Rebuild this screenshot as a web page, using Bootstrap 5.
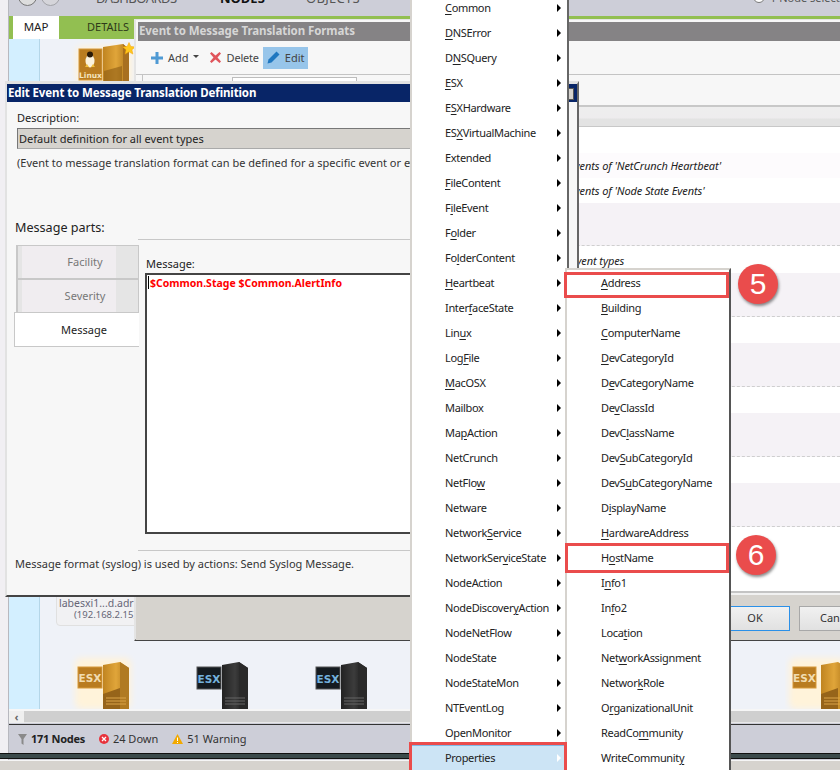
<!DOCTYPE html>
<html lang="en">
<head>
<meta charset="utf-8">
<title>Edit Event to Message Translation Definition</title>
<link href="https://cdn.jsdelivr.net/npm/bootstrap@5.3.0/dist/css/bootstrap.min.css" rel="stylesheet">
<style>
html,body{margin:0;padding:0;background:#fff}
body{font-family:"Noto Sans","DejaVu Sans",sans-serif;font-size:11px;line-height:1.2;color:#222}
.stage{position:relative;width:840px;height:770px;overflow:hidden;background:#f1eff3}
.abs{position:absolute}
/* background application */
.appwin{left:8px;top:0;width:832px;height:770px;background:#cdced8;border-left:1px solid #b8b8bf}
.topnav{height:16px;overflow:hidden;position:relative}
.topnav span{position:absolute;top:-9px;font-size:13px;color:#555;letter-spacing:.3px;white-space:nowrap}
.topnav span.dash{left:87px;letter-spacing:-.5px}
.topnav b{position:absolute;top:-9px;font-size:13px;color:#111}
.circle{position:absolute;width:19px;height:19px;border-radius:50%;border:1.5px solid #777;top:-13px;background:#ddd}
.circle.dim{left:32px;opacity:.5}
.circle.radio{left:744px;width:12px;height:12px;top:-9px;background:#fff}
.topnav span.seltxt{left:761px;font-size:11px;top:-9px;letter-spacing:0}
.greenbar{height:23px;background:#92bf51;border-top:0;display:flex}
.tabmap{margin-left:4px;width:46px;background:#fff;text-align:center;line-height:22px;font-size:11.5px;color:#222}
.tabdet{margin-left:28px;line-height:22px;font-size:11px;color:#2e3a1a}
.canvas{left:9px;top:39px;width:831px;height:671px;background:#eff2f8}
.stripe{left:9px;top:39px;width:31px;height:671px;background:#d3efff;border-right:1px solid #b4d6e8}
.scrollx{left:9px;top:709px;width:831px;height:14px;background:#cfcfcf;border-top:2px solid #f6f6f6;border-bottom:1px solid #e8e8e8}
.scrollbtn{width:15px;height:12px;background:#efefef;color:#666;font-size:11px;line-height:11px;text-align:center;font-weight:700}
.statusbar{left:9px;top:724px;width:831px;height:29px;background:#cdced8;border-top:1px solid #333;display:flex;align-items:center;padding-left:9px;font-size:11px;color:#333}
.statusbar .st{display:inline-flex;align-items:center;gap:4px;margin-right:14px}
.statusbar b{color:#222;letter-spacing:-.3px}
.darkband{left:0;top:753px;width:840px;height:6px;background:#3b4a4b;border-top:1px solid #111;border-bottom:1px solid #111}
.botband{left:0;top:760px;width:840px;height:10px;background:#d6d3ce;border-top:1px solid #f5f5f5}
.nodelabel{left:56px;top:590px;width:110px;height:36px;background:#f1f1f3;border:1px solid #e0e0e0;border-radius:4px;font-size:10.5px;color:#667;padding-top:6px;line-height:12px}
.nodelabel span{display:block;white-space:nowrap;padding-left:2px}
.nodelabel span+span{padding-left:17px;font-size:9.5px}
/* formats window */
.fmtwin{left:134px;top:19px;width:706px;height:622px;background:#f7f7f7;border-left:2px solid #e4e4e4;border-top:1px solid #e4e4e4;border-bottom:2px solid #444}
.fmttitle{margin:2px 0 0 2px;height:19px;background:#858385;color:#d6d6d6;font-weight:700;font-size:11.5px;letter-spacing:-.08px;line-height:18px;padding-left:1px;white-space:nowrap}
.fmttool{height:34px;border-bottom:1px solid #c4c4c4;display:flex;align-items:center;padding-left:15px;color:#444;font-size:11px}
.tbtn{display:inline-flex;align-items:center;gap:5px;height:22px}
.tbtn.addb{margin-right:11px}
.tbtn.delb{margin-right:4px;gap:6px;letter-spacing:-.2px}
.tbtn.on{background:#97c5ea;padding:0 3px 0 4px}
.caretx{display:inline-block;border-left:3px solid transparent;border-right:3px solid transparent;border-top:3px solid #444;margin:0 0 2px -1px}
.hdrbox{left:6px;top:54px;width:700px;height:10px;border-top:1px solid #c4c4c4;border-left:1px solid #c4c4c4}
.hdrcell{left:96px;top:57px;width:125px;height:8px;background:#fff;border:1px solid #bdbdbd;border-bottom:0}
.fmtbody{left:136px;top:105px;width:704px;height:491px;background:#fff}
.thead{height:22px;background:linear-gradient(#eeeeee 0,#eeecee 60%,#e3e3e3 61%,#e3e3e3 100%);border-top:2px solid #c8c8c8;border-bottom:1px solid #c8c8c8}
.rowx{position:absolute;left:0;width:100%}
.tint1{background:#fdfbfd}
.tint2{background:#f5f2f6;border-bottom:1px dashed #cfcfcf}
.rowtxt{font-style:italic;font-size:11px;letter-spacing:-.1px;color:#222;white-space:nowrap}
.fmtfoot{left:136px;top:591px;width:704px;height:49px;background:#d6d3ce;border-top:2px solid #c4c4c4}
.fmtfoot::before{content:"";position:absolute;left:0;right:0;top:0;height:2px;background:#f1f1f1}
.okbtn{left:584px;top:13px;width:70px;height:25px;background:linear-gradient(#f1f1f1,#e1e1e1);border:1px solid #2b90e8;border-radius:0;padding:0;font-size:11px;color:#333}
.cancelbtn{left:663px;top:13px;width:70px;height:25px;background:linear-gradient(#f1f1f1,#e1e1e1);border:1px solid #a8a8a8;border-radius:0;padding:0;font-size:11px;color:#333;text-align:left;padding-left:20px}
/* front dialog */
.dlg{left:5px;top:81px;width:574px;height:516px;background:#f7f7f7;border:1px solid #e2e2e2;border-top-width:3px;border-left-width:2px;border-right:2px solid #666;border-bottom:2px solid #444}
.dlgtitle{height:18px;background:#082567;color:#fff;font-weight:700;font-size:11.5px;letter-spacing:-.12px;line-height:18px;padding-left:1px;white-space:nowrap;border-right:1px solid #082567}
.dlgx{right:0;top:0;width:9px;height:18px}
.dlgx i{position:absolute;left:0;top:4px;width:6px;height:12px;background:#d6d3ce;border:1px solid #555}
.dlgin{width:403px;height:495px;position:relative;overflow:hidden;padding:9px 0 0 10px}
.lab{font-size:11px;color:#222;white-space:nowrap}
.field{margin:4px 0 0 0;width:100%;height:21px;background:#d6d3ce;border:1px solid #aaa;border-top:1px solid #777;border-left:1px solid #777;border-right:0;padding-left:1px;line-height:19px;font-size:11px;color:#222;white-space:nowrap}
.hint{margin-top:7px;font-size:11px;color:#333;white-space:nowrap}
.msgparts{left:8px;top:118px;font-size:12.6px;color:#222}
.rule1{left:131px;top:137px;width:272px;height:1px;background:#c8c8c8}
.rule2{left:131px;top:448px;width:272px;height:1px;background:#c8c8c8}
.dtab{left:9px;width:123px;height:34px;background:linear-gradient(90deg,#f0edf0 0,#f0edf0 82%,#e5e5e5 82%);border:1px solid #c8c8c8;border-left:2px solid #c8c8c8;color:#777;text-align:center;line-height:32px;font-size:11px;padding-left:14px}
.dtab::before{content:"";position:absolute;left:0;top:0;bottom:0;width:4px;background:#e5e5e5}
.dtab.sel{left:7px;width:125px;height:35px;background:#fff;color:#222;border:1px solid #c8c8c8;border-right:0;line-height:34px}
.dtab.sel::before{display:none}
.msglab{left:139px;top:155px;font-size:11px;color:#222}
.msgbox{left:138px;top:171px;width:270px;height:261px;background:#fff;border:2px solid #444;border-right:0;padding:1px 0 0 1px;color:#f00;font-weight:700;font-size:10.5px;white-space:nowrap}
.msgcursor{display:inline-block;width:1px;height:13px;background:#000;margin-right:1px;vertical-align:-2px}
.msgnote{left:8px;top:455px;font-size:11px;color:#333;white-space:nowrap}
/* menus */
.menu1{left:410px;top:-5px;width:159px;height:780px;background:#fff;border-left:2px solid #d6d3ce;border-right:2px solid #666;margin:0;padding:0;list-style:none}
.menu2{left:565px;top:268px;width:166px;height:506px;background:#fff;border-left:2px solid #d6d3ce;border-top:2px solid #d6d3ce;border-right:2px solid #555;margin:0;padding:0;list-style:none}
.mitem{height:25px;line-height:25px;display:flex;align-items:center;justify-content:space-between;color:#222;font-size:11px;letter-spacing:-.33px;white-space:nowrap}
.menu1 .mitem{padding:0 6px 0 33px}
.menu2 .mitem{padding-left:34px}
.mitem u{text-underline-offset:2px}
.arr{width:0;height:0;border-top:4px solid transparent;border-bottom:4px solid transparent;border-left:4px solid #000}
.mitem.hot{background:#cce4f5;box-shadow:inset 0 1px 0 #7fb9e6}
.mitem.hot .arr{border-left-color:#fff}
.redbox{border:3px solid #ea4c4c;background:transparent;pointer-events:none}
.numb{width:40px;height:40px;border-radius:50%;background:#ea4c4c;color:#fff;text-align:center;font-family:"Liberation Sans",sans-serif;font-size:30px;line-height:40px;box-shadow:1px 2px 3px rgba(0,0,0,.45)}
svg{display:block}
</style>
</head>
<body>
<div class="stage">
  <svg width="0" height="0" class="abs">
    <defs>
      <linearGradient id="og" x1="0" y1="0" x2="1" y2="0"><stop offset="0" stop-color="#c08420"/><stop offset=".5" stop-color="#e0a53a"/><stop offset="1" stop-color="#ad7418"/></linearGradient>
      <linearGradient id="bk" x1="0" y1="0" x2="1" y2="0"><stop offset="0" stop-color="#222"/><stop offset=".5" stop-color="#3c3c3c"/><stop offset="1" stop-color="#111"/></linearGradient>
      <filter id="glow" x="-30%" y="-30%" width="160%" height="160%"><feGaussianBlur stdDeviation="3"/></filter>
    </defs>
  </svg>

  <!-- background application -->
  <div class="abs appwin">
    <div class="topnav">
      <i class="circle" style="left:9px"></i><i class="circle dim"></i>
      <span class="dash">DASHBOARDS</span><b style="left:211px">NODES</b><span style="left:297px">OBJECTS</span>
      <i class="circle radio"></i><span class="seltxt">1 Node selected</span>
    </div>
    <div class="greenbar"><div class="tabmap">MAP</div><div class="tabdet">DETAILS</div></div>
  </div>
  <div class="abs canvas"></div>
  <div class="abs stripe"></div>

  <svg class="abs" style="left:70px;top:38px" width="70" height="46" viewBox="0 0 70 46">
    <rect x="6" y="8" width="56" height="38" rx="6" fill="#fff3da" filter="url(#glow)"/>
    <rect x="9" y="11" width="23" height="31" fill="#b97c20" stroke="#d79a3a"/>
    <ellipse cx="20" cy="23" rx="4.5" ry="6.5" fill="#fbf3df"/><circle cx="20" cy="16.5" r="3" fill="#2a1a08"/><path d="M15 29h4l-2-3zM21 29h4l-2-3z" fill="#f0c040"/>
    <text x="20.5" y="39.5" text-anchor="middle" font-size="7.5" font-weight="700" fill="#f3e3bd" font-family="DejaVu Sans,sans-serif">Linux</text>
    <path d="M33 9l20-3 6 5v35H33z" fill="url(#og)"/><path d="M53 6l6 5v35h-6z" fill="#a87020"/><path d="M34 33l18-5v17H34z" fill="#8c5c14" opacity=".6"/>
    <path d="M59 4.500l1.800 4 4.400.4-3.300 2.900 1 4.300-3.900-2.300-3.900 2.300 1-4.300-3.300-2.900 4.400-.4z" fill="#ffc81e" stroke="#f2a000" stroke-width=".5"/>
  </svg>

  <div class="abs nodelabel"><span>labesxi1...d.adr</span><span>(192.168.2.15)</span></div>

  <!-- formats window -->
  <div class="abs fmtwin">
    <div class="fmttitle">Event to Message Translation Formats</div>
    <div class="fmttool">
      <span class="tbtn addb">
        <svg width="12" height="12" viewBox="0 0 12 12"><path d="M4.500 0h3v4.500H12v3H7.500V12h-3V7.500H0v-3h4.500z" fill="#4f9ad4"/></svg>
        <span>Add</span><i class="caretx"></i>
      </span>
      <span class="tbtn delb">
        <svg width="11" height="11" viewBox="0 0 11 11"><path d="M1.500 0L5.500 3.500 9.500 0 11 1.500 7.500 5.500 11 9.500 9.500 11 5.500 7.500 1.500 11 0 9.500 3.500 5.500 0 1.500z" fill="#e0555c"/></svg>
        <span>Delete</span>
      </span>
      <span class="tbtn on">
        <svg width="13" height="13" viewBox="0 0 13 13"><path d="M9.500 0.500L12.500 3.500 4.500 11.500 0.500 12.500 1.500 8.500z" fill="#1f77c0"/></svg>
        <span>Edit</span>
      </span>
    </div>
    <div class="abs hdrbox"></div>
    <div class="abs hdrcell"></div>
  </div>
  <div class="abs fmtbody">
    <div class="thead"></div>
    <div class="rowx tint1" style="top:48px;height:25px"></div>
    <div class="rowx tint2" style="top:98px;height:43px"></div>
    <div class="rowx tint2" style="top:168px;height:44px"></div>
    <div class="rowx tint2" style="top:238px;height:44px"></div>
    <div class="rowx tint2" style="top:308px;height:44px"></div>
    <div class="rowx tint2" style="top:378px;height:44px"></div>
    <div class="abs rowtxt" style="left:419px;top:54px">All events of 'NetCrunch Heartbeat'</div>
    <div class="abs rowtxt" style="left:419px;top:79px">All events of 'Node State Events'</div>
    <div class="abs rowtxt" style="left:415px;top:149px">Any event types</div>
  </div>
  <div class="abs fmtfoot">
    <button type="button" class="btn abs okbtn">OK</button>
    <button type="button" class="btn abs cancelbtn">Cancel</button>
  </div>

  <!-- map below -->
  <svg class="abs" style="left:70px;top:652px" width="70" height="57" viewBox="0 0 70 57">
    <rect x="5" y="6" width="56" height="51" rx="6" fill="#fff3da" filter="url(#glow)"/>
    <rect x="8" y="15" width="24" height="21" fill="#b97c20" stroke="#d79a3a"/>
    <text x="20" y="30" text-anchor="middle" font-size="10.500" font-weight="700" fill="#f1dcb0" font-family="DejaVu Sans,sans-serif">ESX</text>
    <path d="M33 13l17-3 9 6v41H33z" fill="url(#og)"/><path d="M50 10l9 6v41h-9z" fill="#b07a22"/><path d="M33 42l17-6v21H33z" fill="#96641a"/>
    <path d="M36 46h20M36 49h20M36 52h20" stroke="#dba448" stroke-width="1"/>
  </svg>
  <svg class="abs" style="left:189px;top:652px" width="70" height="57" viewBox="0 0 70 57">
    <rect x="8" y="15" width="24" height="22" fill="#151b20" stroke="#555"/>
    <text x="20" y="30.500" text-anchor="middle" font-size="10.500" font-weight="700" fill="#74b2dd" font-family="DejaVu Sans,sans-serif">ESX</text>
    <path d="M33 13l17-3 9 6v41H33z" fill="url(#bk)"/><path d="M50 10l9 6v41h-9z" fill="#2a2a2a"/>
    <path d="M36 46h20M36 49h20M36 52h20" stroke="#666" stroke-width="1"/>
  </svg>
  <svg class="abs" style="left:308px;top:652px" width="70" height="57" viewBox="0 0 70 57">
    <rect x="8" y="15" width="24" height="22" fill="#151b20" stroke="#555"/>
    <text x="20" y="30.500" text-anchor="middle" font-size="10.500" font-weight="700" fill="#74b2dd" font-family="DejaVu Sans,sans-serif">ESX</text>
    <path d="M33 13l17-3 9 6v41H33z" fill="url(#bk)"/><path d="M50 10l9 6v41h-9z" fill="#2a2a2a"/>
    <path d="M36 46h20M36 49h20M36 52h20" stroke="#666" stroke-width="1"/>
  </svg>
  <svg class="abs" style="left:785px;top:652px" width="70" height="57" viewBox="0 0 70 57">
    <rect x="4" y="6" width="56" height="51" rx="6" fill="#fff3da" filter="url(#glow)"/>
    <rect x="8" y="15" width="23" height="21" fill="#b97c20" stroke="#d79a3a"/>
    <text x="19.500" y="30" text-anchor="middle" font-size="10.500" font-weight="700" fill="#f1dcb0" font-family="DejaVu Sans,sans-serif">ESX</text>
    <path d="M36 13l17-3 9 6v41H36z" fill="url(#og)"/><path d="M36 42l17-6v21H36z" fill="#96641a"/>
    <path d="M39 46h18M39 49h18M39 52h18" stroke="#dba448" stroke-width="1"/>
  </svg>

  <div class="abs scrollx"><div class="scrollbtn">&#8249;</div></div>
  <div class="abs statusbar">
    <span class="st">
      <svg width="9" height="11" viewBox="0 0 9 11"><path d="M0 0h9L5.500 5v6l-2-1.500V5z" fill="#8a8a8a"/></svg>
      <b>171 Nodes</b>
    </span>
    <span class="st">
      <svg width="10" height="10" viewBox="0 0 10 10"><circle cx="5" cy="5" r="5" fill="#e8333c"/><path d="M3 3l4 4M7 3l-4 4" stroke="#fff" stroke-width="1.300"/></svg>
      24 Down
    </span>
    <span class="st">
      <svg width="11" height="10" viewBox="0 0 11 10"><path d="M5.500 0L11 10H0z" fill="#f2a900"/><path d="M5.500 3.500v3.500M5.500 8v1" stroke="#fff" stroke-width="1"/></svg>
      51 Warning
    </span>
  </div>
  <div class="abs darkband"></div>
  <div class="abs botband"></div>

  <!-- front dialog -->
  <div class="abs dlg">
    <div class="dlgtitle">Edit Event to Message Translation Definition</div>
    <div class="abs dlgx"><i></i></div>
    <div class="dlgin">
      <div class="lab">Description:</div>
      <div class="field">Default definition for all event types</div>
      <div class="hint">(Event to message translation format can be defined for a specific event or event group)</div>
      <div class="abs msgparts">Message parts:</div>
      <div class="abs rule1"></div>
      <div class="abs dtab" style="top:143px">Facility</div>
      <div class="abs dtab" style="top:177px">Severity</div>
      <div class="abs dtab sel" style="top:210px">Message</div>
      <div class="abs msglab">Message:</div>
      <div class="abs msgbox"><i class="msgcursor"></i>$Common.Stage $Common.AlertInfo</div>
      <div class="abs rule2"></div>
      <div class="abs msgnote">Message format (syslog) is used by actions: Send Syslog Message.</div>
    </div>
  </div>

  <!-- first menu -->
  <ul class="abs menu1">
    <li class="mitem"><span><u>C</u>ommon</span><i class="arr"></i></li>
    <li class="mitem"><span><u>D</u>NSError</span><i class="arr"></i></li>
    <li class="mitem"><span>D<u>N</u>SQuery</span><i class="arr"></i></li>
    <li class="mitem"><span><u>E</u>SX</span><i class="arr"></i></li>
    <li class="mitem"><span>E<u>S</u>XHardware</span><i class="arr"></i></li>
    <li class="mitem"><span>ES<u>X</u>VirtualMachine</span><i class="arr"></i></li>
    <li class="mitem"><span>Extended</span><i class="arr"></i></li>
    <li class="mitem"><span><u>F</u>ileContent</span><i class="arr"></i></li>
    <li class="mitem"><span>F<u>i</u>leEvent</span><i class="arr"></i></li>
    <li class="mitem"><span>F<u>o</u>lder</span><i class="arr"></i></li>
    <li class="mitem"><span>Fo<u>l</u>derContent</span><i class="arr"></i></li>
    <li class="mitem"><span><u>H</u>eartbeat</span><i class="arr"></i></li>
    <li class="mitem"><span>Inter<u>f</u>aceState</span><i class="arr"></i></li>
    <li class="mitem"><span>Lin<u>u</u>x</span><i class="arr"></i></li>
    <li class="mitem"><span>Log<u>F</u>ile</span><i class="arr"></i></li>
    <li class="mitem"><span><u>M</u>acOSX</span><i class="arr"></i></li>
    <li class="mitem"><span>Mailbox</span><i class="arr"></i></li>
    <li class="mitem"><span>Ma<u>p</u>Action</span><i class="arr"></i></li>
    <li class="mitem"><span>NetCrunch</span><i class="arr"></i></li>
    <li class="mitem"><span>NetFlo<u>w</u></span><i class="arr"></i></li>
    <li class="mitem"><span>Netware</span><i class="arr"></i></li>
    <li class="mitem"><span>Network<u>S</u>ervice</span><i class="arr"></i></li>
    <li class="mitem"><span>NetworkSer<u>v</u>iceState</span><i class="arr"></i></li>
    <li class="mitem"><span>NodeAction</span><i class="arr"></i></li>
    <li class="mitem"><span>NodeDiscover<u>y</u>Action</span><i class="arr"></i></li>
    <li class="mitem"><span>NodeNetFlow</span><i class="arr"></i></li>
    <li class="mitem"><span>NodeState</span><i class="arr"></i></li>
    <li class="mitem"><span>NodeStateMon</span><i class="arr"></i></li>
    <li class="mitem"><span>NTEventLog</span><i class="arr"></i></li>
    <li class="mitem"><span>OpenMonitor</span><i class="arr"></i></li>
    <li class="mitem hot"><span>Properties</span><i class="arr"></i></li>
  </ul>

  <!-- submenu -->
  <ul class="abs menu2">
    <li class="mitem"><span><u>A</u>ddress</span></li>
    <li class="mitem"><span><u>B</u>uilding</span></li>
    <li class="mitem"><span><u>C</u>omputerName</span></li>
    <li class="mitem"><span><u>D</u>evCategoryId</span></li>
    <li class="mitem"><span>D<u>e</u>vCategoryName</span></li>
    <li class="mitem"><span>De<u>v</u>ClassId</span></li>
    <li class="mitem"><span>DevC<u>l</u>assName</span></li>
    <li class="mitem"><span>Dev<u>S</u>ubCategoryId</span></li>
    <li class="mitem"><span>DevS<u>u</u>bCategoryName</span></li>
    <li class="mitem"><span>D<u>i</u>splayName</span></li>
    <li class="mitem"><span><u>H</u>ardwareAddress</span></li>
    <li class="mitem"><span>H<u>o</u>stName</span></li>
    <li class="mitem"><span>I<u>n</u>fo1</span></li>
    <li class="mitem"><span>In<u>f</u>o2</span></li>
    <li class="mitem"><span>Loca<u>t</u>ion</span></li>
    <li class="mitem"><span>Net<u>w</u>orkAssignment</span></li>
    <li class="mitem"><span>Networ<u>k</u>Role</span></li>
    <li class="mitem"><span>O<u>r</u>ganizationalUnit</span></li>
    <li class="mitem"><span>ReadCo<u>m</u>munity</span></li>
    <li class="mitem"><span>WriteCommunit<u>y</u></span></li>
  </ul>

  <div class="abs redbox" style="left:564px;top:272px;width:165px;height:26px"></div>
  <div class="abs redbox" style="left:565px;top:543px;width:164px;height:30px"></div>
  <div class="abs redbox" style="left:409px;top:742px;width:158px;height:31px"></div>
  <div class="abs numb" style="left:738px;top:264px">5</div>
  <div class="abs numb" style="left:736px;top:535px">6</div>
</div>
<script src="https://cdn.jsdelivr.net/npm/bootstrap@5.3.0/dist/js/bootstrap.bundle.min.js"></script>
</body>
</html>
